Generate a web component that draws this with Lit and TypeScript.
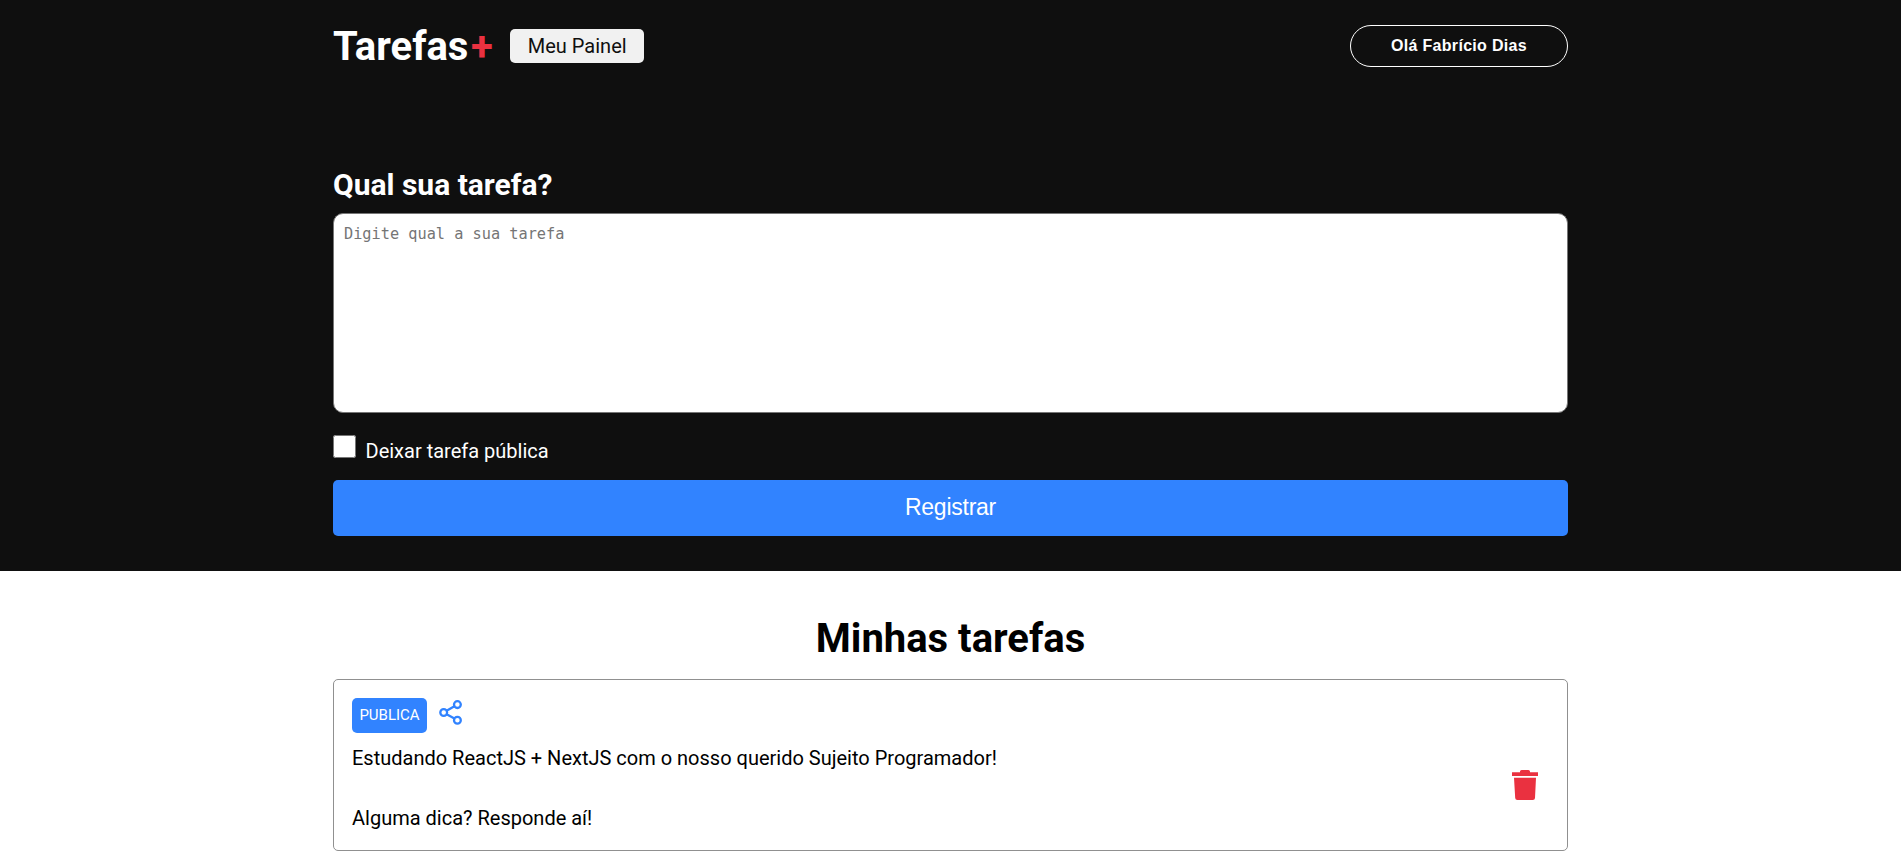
import { LitElement, html, css } from "lit";
import { customElement } from "lit/decorators.js";

@customElement("app-root")
class AppRoot extends LitElement {
  static styles = css`
    * { box-sizing: border-box; margin: 0; padding: 0; }
    :host { display: block; height: 863px; overflow: hidden; background: #fff; font-family: Roboto, sans-serif; color: #000; }
    .page { width: calc(100% - 1px); }
    .dark { background: #0f0f0f; height: 571px; color: #fff; }
    .wrap { width: 1235px; margin: 0 auto; }
    header { height: 92px; display: flex; justify-content: space-between; align-items: center; }
    nav { display: flex; align-items: center; }
    .logo { font-size: 40px; line-height: 47px; font-weight: 700; }
    .logo span { color: #ea3140; padding-left: 2.5px; }
    .panel { margin-left: 17px; background: #f1f1f1; color: #0f0f0f; width: 134px; text-align: center; padding: 4px 0 4px 1px; border-radius: 5px; font-size: 20px; line-height: 26px; }
    .user { width: 218px; height: 42px; background: transparent; border: 1px solid #fff; border-radius: 24px; color: #fff; font: 700 16px "Liberation Sans", Arial, sans-serif; letter-spacing: 0.3px; }
    .form { padding-top: 75px; }
    h1 { font-size: 30px; line-height: 35px; margin-bottom: 11px; }
    textarea { display: block; width: 100%; height: 200px; resize: none; border-radius: 10px; border: 1px solid #767676; padding: 10px; font: 15.25px/20px "DejaVu Sans Mono", monospace; outline: none; }
    .check { display: flex; margin: 22px 0 17px; }
    .check input { width: 23px; height: 23px; margin-right: 9.5px; }
    .check label { font-size: 20px; line-height: 24px; padding-top: 4px; }
    .submit { display: block; width: 100%; height: 56px; border: 0; border-radius: 5px; padding-bottom: 2px; background: #3183ff; color: #fff; font: 23px "Liberation Sans", Arial, sans-serif; letter-spacing: -0.25px; }
    h2 { text-align: center; font-size: 40px; line-height: 47px; padding-top: 44px; margin-bottom: 17px; }
    .card { border: 1px solid #909090; border-radius: 5px; padding: 18px; height: 172px; display: flex; justify-content: space-between; align-items: flex-start; }
    .tags { display: flex; align-items: flex-start; margin-bottom: 10px; }
    .tag { background: #3183ff; color: #fff; border-radius: 5px; width: 75px; height: 35px; line-height: 34px; font-size: 15px; text-align: center; }
    .share { margin: 2px 0 0 12px; display: block; }
    .text { font-size: 20px; line-height: 30px; white-space: pre-wrap; }
    .trash { display: block; margin: 72px 11px 0 0; }
  `;
  render() {
    return html`
      <div class="page">
        <section class="dark">
          <div class="wrap">
            <header>
              <nav><div class="logo">Tarefas<span>+</span></div><a class="panel">Meu Painel</a></nav>
              <button class="user">Olá Fabrício Dias</button>
            </header>
            <div class="form">
              <h1>Qual sua tarefa?</h1>
              <textarea placeholder="Digite qual a sua tarefa"></textarea>
              <div class="check"><input type="checkbox" id="pub" /><label for="pub">Deixar tarefa pública</label></div>
              <button class="submit">Registrar</button>
            </div>
          </div>
        </section>
        <section class="wrap">
          <h2>Minhas tarefas</h2>
          <article class="card">
            <div>
              <div class="tags">
                <span class="tag">PUBLICA</span>
                <svg class="share" width="24" height="25" viewBox="0 0 24 25" fill="none" stroke="#3183ff" stroke-width="2.3">
                  <circle cx="4.7" cy="12.5" r="3.4" /><circle cx="18.4" cy="4.6" r="3.4" /><circle cx="18.4" cy="20.3" r="3.4" />
                  <path d="M7.6 10.8 15.4 6.3M7.6 14.2l7.8 4.4" />
                </svg>
              </div>
              <p class="text">Estudando ReactJS + NextJS com o nosso querido Sujeito Programador!

Alguma dica? Responde aí!</p>
            </div>
            <svg class="trash" width="26" height="30" viewBox="0 0 26 30" fill="#ea3140">
              <path d="M0 2.2h8V1.6Q8 0 9.6 0h6.8Q18 0 18 1.6v.6h8V6H0zM2 7.7h22l-1 20.2Q22.9 30 20.8 30H5.4Q3.3 30 3.2 27.9z" />
            </svg>
          </article>
        </section>
      </div>
    `;
  }
}
